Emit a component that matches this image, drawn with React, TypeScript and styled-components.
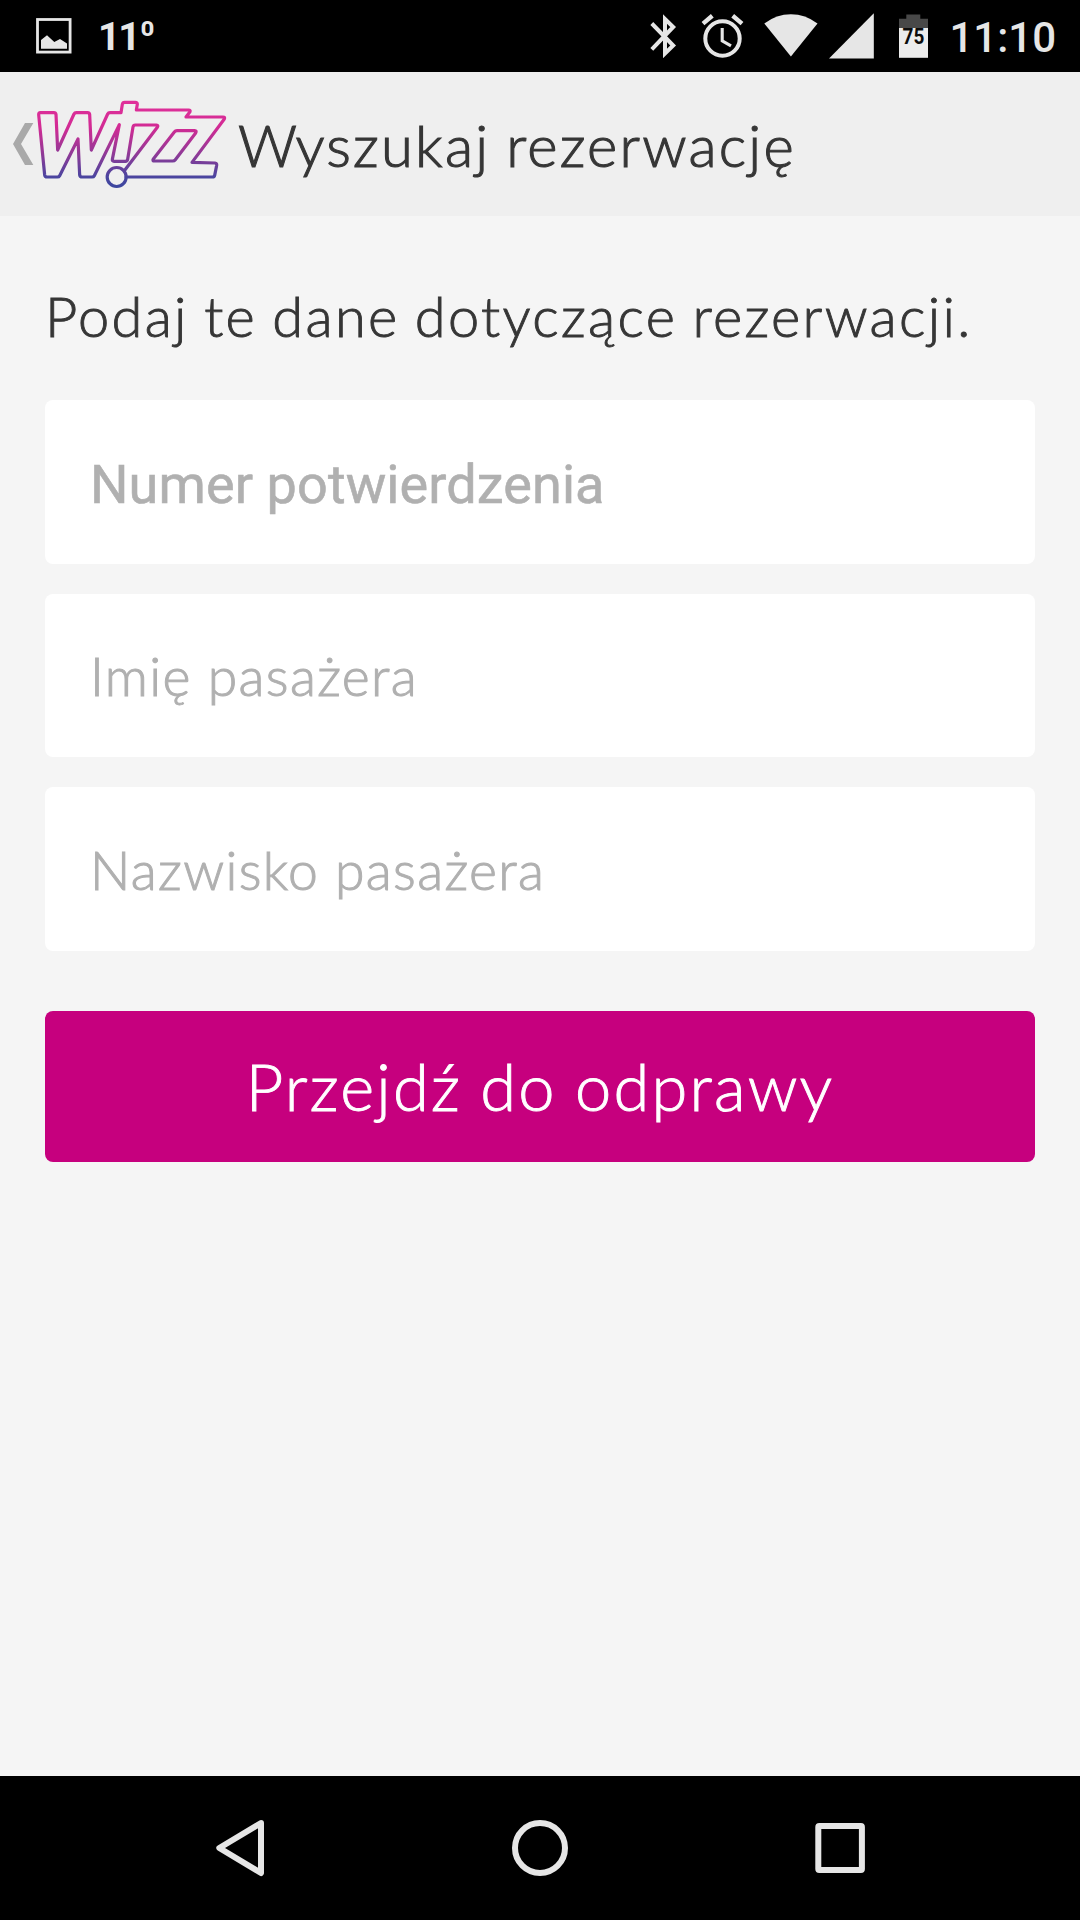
import React from "react";
import styled, { createGlobalStyle } from "styled-components";

const GlobalStyle = createGlobalStyle`
  *, *::before, *::after { box-sizing: border-box; }
  html, body { margin: 0; padding: 0; background: #f5f5f5; }
`;

const brandFont = `Lato, "Open Sans", sans-serif`;
const systemFont = `Roboto, "Noto Sans", sans-serif`;
const glyph = "#e6e6e6";

const Screen = styled.div`
  display: flex;
  flex-direction: column;
  width: 1080px;
  height: 1920px;
  overflow: hidden;
  background: #f5f5f5;
`;

const StatusBar = styled.div`
  display: flex;
  align-items: center;
  justify-content: space-between;
  height: 72px;
  padding: 0 24px 0 35px;
  background: #000;
  color: ${glyph};
  font-family: ${systemFont};
`;

const StatusGroup = styled.div`
  display: flex;
  align-items: center;
  height: 72px;
`;

const StatusIcons = styled.div`
  display: grid;
  grid-template-columns: 51px 62.5px 65.5px 70px 29px;
  align-items: center;
`;

const Icon = styled.svg`
  display: block;
  flex: none;
`;

const Temperature = styled.span`
  display: flex;
  margin-left: 26px;
  padding-top: 2px;
  font-size: 39px;
  font-weight: 700;
  letter-spacing: -2.2px;
  line-height: 70px;
`;

const Degree = styled.span`
  margin: -1px 0 0 2px;
  font-size: 39px;
  font-weight: 500;
`;

const Clock = styled.span`
  margin-left: 21px;
  padding-top: 3px;
  font-size: 42px;
  font-weight: 500;
  line-height: 69px;
`;

const Header = styled.header`
  display: flex;
  align-items: center;
  height: 144px;
  background: #efefef;
`;

const BackLink = styled.a`
  display: flex;
`;

const Title = styled.h1`
  margin: 0 0 0 -1px;
  color: #363636;
  font-family: ${brandFont};
  font-size: 58px;
  font-weight: 300;
  letter-spacing: 2.2px;
  word-spacing: -2px;
  line-height: 145px;
  white-space: nowrap;
  -webkit-text-stroke: 1.1px #363636;

  &::first-letter {
    letter-spacing: -1.6px;
  }
`;

const Lead = styled.p`
  margin: 0 0 30px;
  color: #363636;
  font-family: ${brandFont};
  font-size: 56px;
  font-weight: 300;
  letter-spacing: 2.3px;
  word-spacing: -2.2px;
  line-height: 109px;
  white-space: nowrap;
  -webkit-text-stroke: 0.9px #363636;
`;

const Main = styled.main`
  flex: 1;
  padding: 45px;
`;

const Form = styled.div`
  display: flex;
  flex-direction: column;
  gap: 30px;
`;

const Field = styled.div<{ $system?: boolean }>`
  display: flex;
  align-items: center;
  height: 163.5px;
  padding: ${(p) => (p.$system ? "5px 45px 0" : "0 45px")};
  border-radius: 8px;
  background: #fff;
  color: #b0b0b0;
  font-family: ${(p) => (p.$system ? systemFont : brandFont)};
  font-size: ${(p) => (p.$system ? "54px" : "53.5px")};
  font-weight: ${(p) => (p.$system ? 400 : 300)};
  letter-spacing: ${(p) => (p.$system ? "0.1px" : "1.36px")};
  white-space: nowrap;
  -webkit-text-stroke: ${(p) => (p.$system ? "0.6px" : "1px")} #b0b0b0;
`;

const SubmitButton = styled.button`
  display: block;
  width: 100%;
  height: 151px;
  margin: 30px 0 0;
  padding: 0;
  border: 0;
  border-radius: 8px;
  background: #c6007e;
  color: #fff;
  font-family: ${brandFont};
  font-size: 65px;
  font-weight: 300;
  letter-spacing: 2.2px;
  word-spacing: -1.6px;
  line-height: 151px;
  -webkit-text-stroke: 0.9px #fff;
`;

const NavBar = styled.nav`
  display: flex;
  align-items: center;
  justify-content: center;
  gap: 240px;
  height: 144px;
  background: #000;
`;

const PictureIcon = () => (
  <Icon width="37" height="38" viewBox="35 17 37 38">
    <rect x="37.5" y="19.5" width="32.6" height="32.6" fill="none" stroke={glyph} strokeWidth="2.8" />
    <path d="M41 48.7V40l6-4.8 7.3 6.8 5.7-3 7 4.5v5.2z" fill={glyph} />
  </Icon>
);

const BluetoothIcon = () => (
  <Icon width="27" height="44" viewBox="650 14 27 44">
    <path
      d="M651.8 23.5L673.2 45.5L665 53.5V19L673.2 27L651.8 49.3"
      fill="none"
      stroke={glyph}
      strokeWidth="4"
      strokeLinejoin="miter"
    />
  </Icon>
);

const AlarmIcon = () => (
  <Icon width="43" height="44" viewBox="701 14 43 44">
    <g fill="none" stroke={glyph}>
      <circle cx="722.5" cy="38.5" r="17.2" strokeWidth="4" />
      <path d="M703 23.6l9.3-7.8M742 23.6l-9.3-7.8" strokeWidth="4.4" />
      <path d="M722.2 28v12.8l8.8 5" strokeWidth="3.1" />
    </g>
  </Icon>
);

const WifiIcon = () => (
  <Icon width="54" height="44" viewBox="763.5 14 54 44">
    <path d="M790.4 56.6L763.8 23.4Q776 14.2 790.4 14.2T817 23.4z" fill={glyph} />
  </Icon>
);

const SignalIcon = () => (
  <Icon width="45" height="46" viewBox="829 13.5 45 46">
    <path d="M829 59L873.8 13.8V59z" fill={glyph} />
  </Icon>
);

const BatteryIcon = () => (
  <Icon width="29" height="44" viewBox="899 14 29 44">
    <path d="M899 28V18.7h7.3v-4.2h14v4.2h7.7V28z" fill="#484848" />
    <path d="M899 28h29v29.8h-29z" fill="#ececec" />
    <text
      x="913.5"
      y="44.2"
      fill="#0c0c0c"
      fontFamily={systemFont}
      fontSize="22"
      fontWeight="700"
      textAnchor="middle"
      textLength="21.8"
      lengthAdjust="spacingAndGlyphs"
    >
      75
    </text>
  </Icon>
);

const BrandLogo = () => (
  <Icon width="239" height="144" viewBox="0 -24 717 432">
    <defs>
      <linearGradient id="brand" gradientUnits="userSpaceOnUse" x1="0" y1="64" x2="0" y2="322">
        <stop offset="0" stopColor="#e0309a" />
        <stop offset="0.3" stopColor="#d22b94" />
        <stop offset="0.62" stopColor="#8e3a97" />
        <stop offset="0.88" stopColor="#4a459f" />
        <stop offset="1" stopColor="#3c479f" />
      </linearGradient>
    </defs>
    <path d="M75 129h25L63 192l37 63H75L39 192z" fill="#a9a9a9" />
    <g fill="none" stroke="url(#brand)" strokeWidth="9.6" strokeLinejoin="round" strokeLinecap="round">
      <path d="M378 291H637Q643 291 644 286L650 256Q651 250 645 249L576 247L673 117Q676 111 669 111H558L570 95Q572 90 566 90H409L412 73Q412 67 406 67H374Q368 67 367 73L363 98H330Q325 98 323 102L274 210L269 103Q268 98 263 98H229Q224 98 222 102L173 210L168 103Q167 98 162 98H121Q116 98 116 104L134 285Q135 291 141 291H172Q177 291 179 287L234 177L239 285Q240 291 246 291H276Q281 291 283 287L358 134L337 238Q336 244 342 244H376Q382 244 383 238L399 141Q400 135 406 135H469Q476 136 472 142L373 272" />
      <path d="M531 152H584Q591 152 587 159L526 239Q523 243 518 243H464Q456 243 460 237L523 156Q526 152 531 152Z" />
      <circle cx="350" cy="291" r="28.5" />
    </g>
  </Icon>
);

const BackIcon = () => (
  <Icon width="60" height="60" viewBox="210 1818 60 60">
    <path
      d="M261 1823L219.3 1848L261 1873Z"
      fill="none"
      stroke={glyph}
      strokeWidth="6"
      strokeLinejoin="round"
    />
  </Icon>
);

const HomeIcon = () => (
  <Icon width="60" height="60" viewBox="510 1818 60 60">
    <circle cx="540" cy="1848" r="25" fill="none" stroke={glyph} strokeWidth="6" />
  </Icon>
);

const RecentsIcon = () => (
  <Icon width="60" height="60" viewBox="810 1818 60 60">
    <rect x="818.3" y="1826" width="43.6" height="44" rx="1" fill="none" stroke={glyph} strokeWidth="6" strokeLinejoin="round" />
  </Icon>
);

export default function App() {
  return (
    <Screen>
      <GlobalStyle />
      <StatusBar>
        <StatusGroup>
          <PictureIcon />
          <Temperature>
            11<Degree>⁰</Degree>
          </Temperature>
        </StatusGroup>
        <StatusGroup>
          <StatusIcons>
            <BluetoothIcon />
            <AlarmIcon />
            <WifiIcon />
            <SignalIcon />
            <BatteryIcon />
          </StatusIcons>
          <Clock>11:10</Clock>
        </StatusGroup>
      </StatusBar>
      <Header>
        <BackLink>
          <BrandLogo />
        </BackLink>
        <Title>Wyszukaj rezerwację</Title>
      </Header>
      <Main>
        <Lead>Podaj te dane dotyczące rezerwacji.</Lead>
        <Form>
          <Field $system>Numer potwierdzenia</Field>
          <Field>Imię pasażera</Field>
          <Field>Nazwisko pasażera</Field>
          <SubmitButton>Przejdź do odprawy</SubmitButton>
        </Form>
      </Main>
      <NavBar>
        <BackIcon />
        <HomeIcon />
        <RecentsIcon />
      </NavBar>
    </Screen>
  );
}
